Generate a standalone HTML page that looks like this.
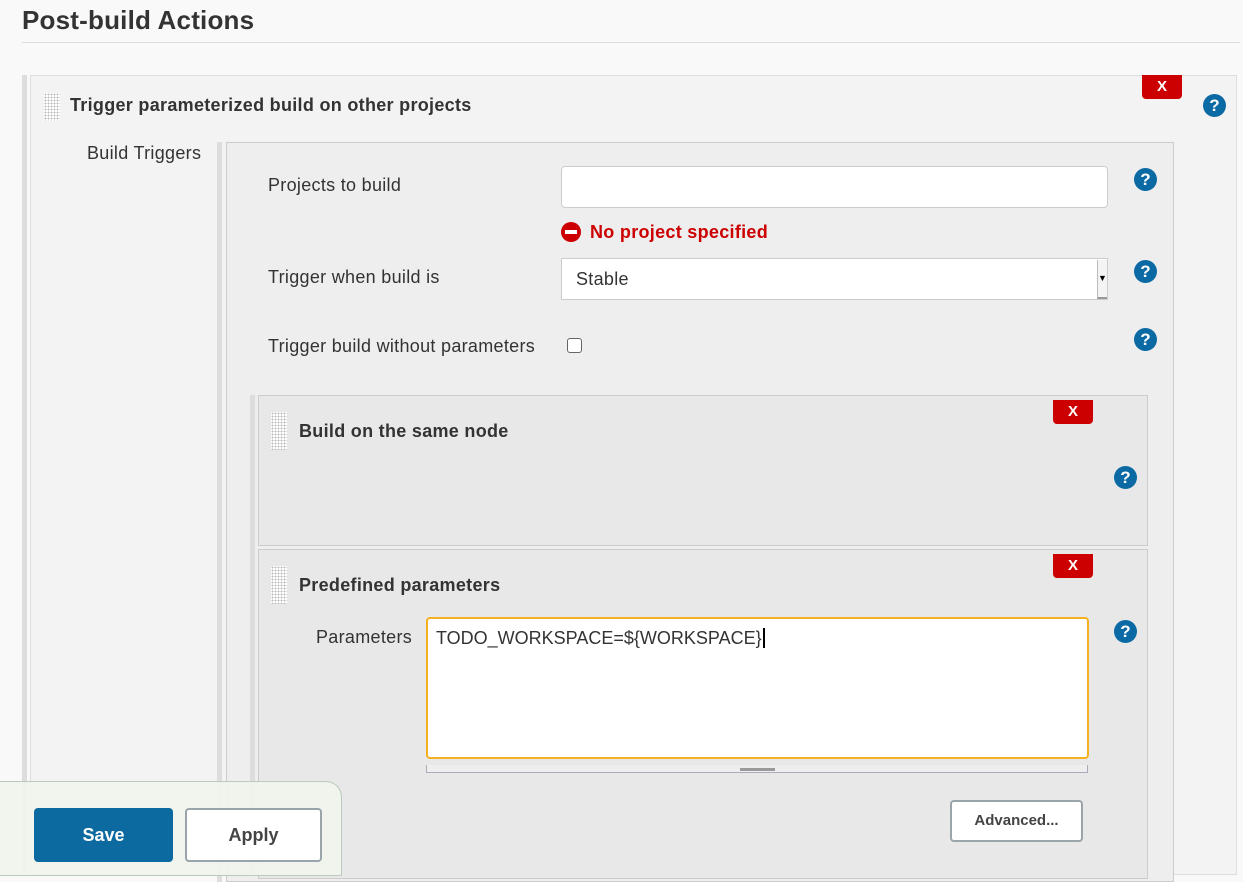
<!DOCTYPE html>
<html><head><style>
*{box-sizing:border-box}
body{margin:0;width:1243px;height:872px;overflow:hidden;background:#f9f9f9;font-family:"Liberation Sans",sans-serif;color:#333;position:relative}
.a{position:absolute}
.h{font-weight:bold}
.x{position:absolute;width:40px;height:24px;background:#cc0000;border-radius:0 0 4px 4px;color:#fff;font-weight:bold;font-size:15px;text-align:center;line-height:24px}
.q{position:absolute;width:23px;height:23px;border-radius:50%;background:#0b69a3;color:#fff;font-weight:bold;font-size:17px;text-align:center;line-height:23px}
.grip{position:absolute;width:16px;height:38px;background-image:radial-gradient(circle,#bbb 0.8px,transparent 1px);background-size:3px 3px;background-color:#fff}
.lbl{position:absolute;font-size:18px;letter-spacing:0.3px;color:#333}
.t{position:absolute;font-weight:bold;font-size:18px;letter-spacing:0.3px}
</style></head><body>
<div class="a h" style="left:22px;top:5px;font-size:26px;letter-spacing:0.2px;color:#333">Post-build Actions</div>
<div class="a" style="left:22px;top:42px;width:1218px;height:1px;background:#ddd"></div>
<div class="a" style="left:22px;top:75px;width:5px;height:800px;background:#ddd"></div>
<div class="a" style="left:30px;top:75px;width:1207px;height:800px;background:#f3f3f3;border:1px solid #ddd"></div>
<div class="grip" style="left:44px;top:93px;height:28px"></div>
<div class="t" style="left:70px;top:95px">Trigger parameterized build on other projects</div>
<div class="x" style="left:1142px;top:75px">X</div>
<div class="q" style="left:1203px;top:94px">?</div>
<div class="lbl" style="left:87px;top:143px">Build Triggers</div>
<div class="a" style="left:217px;top:142px;width:5px;height:740px;background:#ddd"></div>
<div class="a" style="left:226px;top:142px;width:948px;height:740px;background:#eee;border:1px solid #ccc"></div>
<div class="lbl" style="left:268px;top:175px">Projects to build</div>
<div class="a" style="left:561px;top:166px;width:547px;height:42px;background:#fff;border:1px solid #ccc;border-radius:4px"></div>
<div class="q" style="left:1134px;top:168px">?</div>
<div class="a" style="left:561px;top:222px;width:20px;height:20px;border-radius:50%;background:#cc0000"><div class="a" style="left:4px;top:8px;width:12px;height:4px;background:#fff"></div></div>
<div class="t" style="left:590px;top:222px;color:#cc0000">No project specified</div>
<div class="lbl" style="left:268px;top:267px">Trigger when build is</div>
<div class="a" style="left:561px;top:258px;width:547px;height:42px;background:#fff;border:1px solid #ccc"></div>
<div class="lbl" style="left:576px;top:269px">Stable</div>
<div class="a" style="left:1097px;top:260px;width:10px;height:39px;background:#f4f4f4;border-left:1px solid #bbb;border-bottom:2px solid #999;font-size:9px;text-align:center;line-height:36px;color:#000">▼</div>
<div class="q" style="left:1134px;top:260px">?</div>
<div class="lbl" style="left:268px;top:336px">Trigger build without parameters</div>
<div class="a" style="left:567px;top:338px;width:15px;height:15px;border:1px solid #666;border-radius:3px;background:#fff"></div>
<div class="q" style="left:1134px;top:328px">?</div>
<div class="a" style="left:250px;top:395px;width:5px;height:480px;background:#ddd"></div>
<div class="a" style="left:258px;top:395px;width:890px;height:151px;background:#e8e8e8;border:1px solid #ccc"></div>
<div class="grip" style="left:271px;top:412px"></div>
<div class="t" style="left:299px;top:421px">Build on the same node</div>
<div class="x" style="left:1053px;top:400px">X</div>
<div class="q" style="left:1114px;top:466px">?</div>
<div class="a" style="left:258px;top:549px;width:890px;height:330px;background:#e8e8e8;border:1px solid #ccc"></div>
<div class="grip" style="left:271px;top:566px"></div>
<div class="t" style="left:299px;top:575px">Predefined parameters</div>
<div class="x" style="left:1053px;top:554px">X</div>
<div class="lbl" style="left:316px;top:627px">Parameters</div>
<div class="a" style="left:426px;top:617px;width:663px;height:142px;background:#fff;border:2px solid #f5b120;border-radius:4px"></div>
<div class="lbl" style="left:436px;top:628px;letter-spacing:0">TODO_WORKSPACE=${WORKSPACE}<span style="border-left:2px solid #000;margin-left:1px"></span></div>
<div class="a" style="left:426px;top:765px;width:662px;height:8px;border:1px solid #aab;border-top:none;background:#eee"></div>
<div class="a" style="left:740px;top:768px;width:35px;height:3px;background:#999"></div>
<div class="q" style="left:1114px;top:620px">?</div>
<div class="a h" style="left:950px;top:800px;width:133px;height:42px;background:#fff;border:2px solid #9aa4ab;border-radius:4px;text-align:center;line-height:38px;font-size:15px;color:#444">Advanced...</div>
<div class="a" style="left:0;top:781px;width:342px;height:95px;background:rgba(240,244,236,0.93);border:1px solid #b8cbbc;border-left:none;border-radius:0 16px 0 0"></div>
<div class="a h" style="left:34px;top:808px;width:139px;height:54px;background:#0d6aa0;border-radius:4px;color:#fff;text-align:center;line-height:54px;font-size:18px">Save</div>
<div class="a h" style="left:185px;top:808px;width:137px;height:54px;background:#fff;border:2px solid #9aa4ab;border-radius:4px;color:#444;text-align:center;line-height:50px;font-size:18px">Apply</div>
</body></html>
